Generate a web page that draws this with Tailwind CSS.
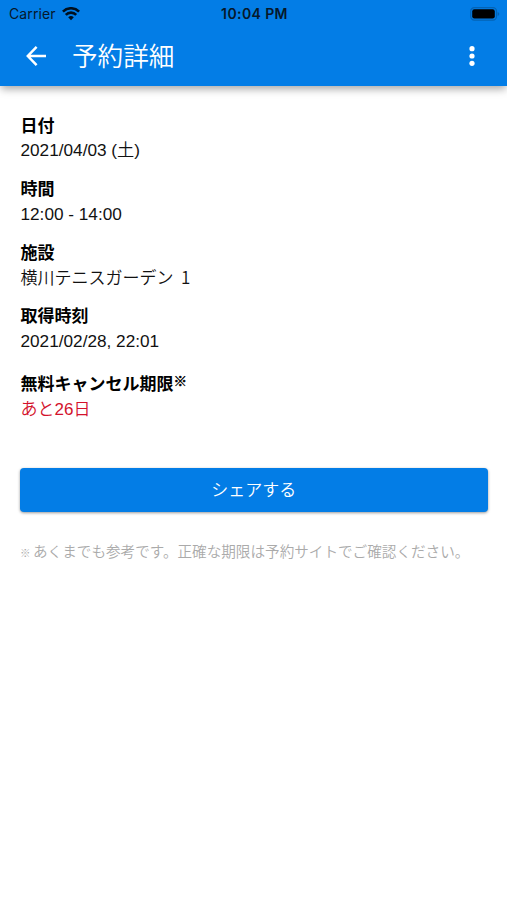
<!DOCTYPE html>
<html lang="ja">
<head>
    <meta charset="UTF-8">
    <meta name="viewport" content="width=device-width, initial-scale=1.0">
    <title>予約詳細</title>
    <script src="https://cdn.jsdelivr.net/npm/@tailwindcss/browser@4"></script>
</head>
<body class="bg-white min-h-screen overflow-hidden text-[#111] font-['Liberation_Sans','Noto_Sans_CJK_JP',sans-serif]">
    <header class="h-[86px] bg-[#037de6] shadow-[0_4px_8px_-1px_rgba(0,0,0,0.35)]">
        <!-- Status bar -->
        <div class="grid grid-cols-3 items-center h-[27px] pl-[9px] pr-[7px] text-[#06182b] font-[Inter,sans-serif]">
            <div class="flex items-center gap-[6px]">
                <span class="text-[14px] leading-[26px] tracking-[0.1px]">Carrier</span>
                <svg class="w-[18px] h-[14px]" viewBox="0 0 18 14" fill="none" stroke="#00101f" stroke-width="2.6">
                    <path d="M0.9 4.6a11.5 11.5 0 0 1 16.2 0" />
                    <path d="M3.8 7.8a7.3 7.3 0 0 1 10.4 0" />
                    <path d="M9 13.2L6.2 10.3a4 4 0 0 1 5.6 0z" fill="#00101f" stroke="none" />
                </svg>
            </div>
            <span class="text-center text-[14px] leading-[26px] tracking-[0.4px] font-semibold whitespace-nowrap">10:04 PM</span>
            <svg class="justify-self-end w-[30px] h-[14px]" viewBox="0 0 30 14">
                <rect x="0.7" y="0.7" width="25.8" height="12.4" rx="3.6" fill="none" stroke="#0463b4" stroke-width="1.2" />
                <rect x="2.2" y="2.3" width="22.6" height="9.2" rx="2.2" fill="#000" />
                <path d="M27.6 5v4q1.7-.6 1.7-2t-1.7-2z" fill="#0463b4" />
            </svg>
        </div>
        <!-- Toolbar -->
        <div class="flex items-center h-[58px] pl-[26px] pr-[32.5px] text-white">
            <svg class="w-5 h-5" viewBox="0 0 20 20" fill="none" stroke="currentColor" stroke-width="2.5">
                <path d="M10.6 0.9L1.8 10l8.8 9.1M2 10h18" />
            </svg>
            <h1 class="ml-[26px] pb-[2px] text-[25.6px] leading-[56px] font-['Noto_Sans_CJK_JP',sans-serif] font-[350]">予約詳細</h1>
            <svg class="ml-auto w-[6px] h-5" viewBox="0 0 6 20" fill="currentColor">
                <circle cx="3" cy="2.7" r="2.6" />
                <circle cx="3" cy="10" r="2.6" />
                <circle cx="3" cy="17.3" r="2.6" />
            </svg>
        </div>
    </header>

    <main class="px-[20px] pt-[28.5px] text-[17px] leading-[24.5px]">
        <dl class="pl-[0.5px]">
            <div class="h-[63.5px]">
                <dt class="h-[24.5px] font-bold text-black">日付</dt>
                <dd class="h-[24.5px] leading-[22.5px] text-[17.2px]">2021/04/03 (<span class="font-['Noto_Sans_CJK_JP',sans-serif] font-[350] leading-0">土</span>)</dd>
            </div>
            <div class="h-[63.5px]">
                <dt class="h-[24.5px] font-bold text-black">時間</dt>
                <dd class="h-[24.5px] leading-[22.5px] text-[17.2px]">12:00 - 14:00</dd>
            </div>
            <div class="h-[63.5px]">
                <dt class="h-[24.5px] font-bold text-black">施設</dt>
                <dd class="h-[24.5px] leading-[21.5px] font-['Noto_Sans_CJK_JP',sans-serif] font-[350]">横川テニスガーデン&nbsp; 1</dd>
            </div>
            <div class="h-[68px]">
                <dt class="h-[24.5px] font-bold text-black">取得時刻</dt>
                <dd class="h-[24.5px] leading-[22.5px] text-[17.2px]">2021/02/28, 22:01</dd>
            </div>
            <div class="h-[49px]">
                <dt class="h-[24.5px] font-bold text-black">無料キャンセル期限<sup class="text-[13.5px] leading-0 -top-[4px] [-webkit-text-stroke:0.4px_black]">※</sup></dt>
                <dd class="h-[24.5px] text-[#d3122c] font-[350]">あと26日</dd>
            </div>
        </dl>

        <button class="block w-[467.5px] h-[44px] mt-[45.5px] pt-[3px] rounded-[4px] bg-[#037de6] text-white text-[17px] font-[350] shadow-[0_1px_3px_rgba(0,0,0,0.4)]">シェアする</button>

        <p class="mt-[28px] text-[14.6px] leading-6 text-[#aaa] font-[350] whitespace-nowrap"><span class="inline-block w-[13px] text-[10.5px] font-bold">※</span>あくまでも参考です。正確な期限は予約サイトでご確認ください。</p>
    </main>
</body>
</html>
